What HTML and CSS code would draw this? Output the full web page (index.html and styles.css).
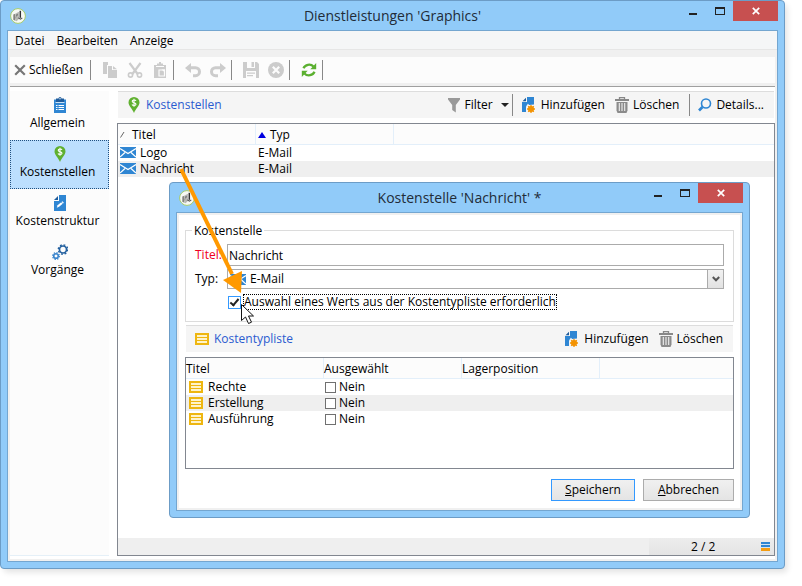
FILE: index.html
```
<!DOCTYPE html>
<html lang="de">
<head>
<meta charset="utf-8">
<title>Dienstleistungen 'Graphics'</title>
<link rel="stylesheet" href="styles.css">
</head>
<body>
<svg class="sprite" aria-hidden="true">
  <symbol id="app" viewBox="0 0 16 16"><circle cx="8" cy="8" r="7.400" fill="#f7f9f5" stroke="#a5cc6b" stroke-width="1"/><path d="M3.300 6.500l2-.8v7l-2-.9z" fill="#85857f"/><path d="M5.300 5.700l3-1.700v7.500l-1.600 1.700-1.400-.5z" fill="#b9bab4"/><path d="M6.300 6.800l1.300-.8v1.300l-1.300.7zM5.300 10.500l1.200-3" fill="#777" stroke="#777" stroke-width=".5"/><path d="M10.300 2.800v7" stroke="#333" stroke-width="1.500"/><path d="M8 9.800l2.500 1.400 1.800-1.300" fill="none" stroke="#555" stroke-width="1.100"/><path d="M8.600 4v5" stroke="#aaa" stroke-width=".8"/></symbol>
  <symbol id="close" viewBox="0 0 12 12"><path d="M1.200 1.200l9.600 9.600M10.800 1.200L1.200 10.800" stroke="#777" stroke-width="2.200"/></symbol>
  <symbol id="copy" viewBox="0 0 16 16"><path d="M1 0h5v3H5v9H1z"/><path d="M6 4h4v4h5v8H6z"/><path d="M11 4l4 3.200h-4z"/></symbol>
  <symbol id="cut" viewBox="0 0 16 16"><path d="M2.500 1L11 12.500M13.500 1L5 12.500" stroke="#ccc" stroke-width="2.200" fill="none"/><circle cx="3.500" cy="13" r="2.100" fill="none" stroke="#ccc" stroke-width="1.600"/><circle cx="12.500" cy="13" r="2.100" fill="none" stroke="#ccc" stroke-width="1.600"/></symbol>
  <symbol id="paste" viewBox="0 0 16 16"><path d="M2 3h3V1.500h2V0h2v1.500h2V3h3v13H2z"/><path d="M4 4.500h8M7 8h5.500v6H7z" stroke="#fcfcfc" stroke-width="1.200" fill="none"/><path d="M9.500 7.500h3.500v3z" fill="#fcfcfc"/></symbol>
  <symbol id="undo" viewBox="0 0 16 16"><path d="M0 6l6-5v3.200h4.500a5.500 5.500 0 0 1 0 11H8v-3h2.500a2.500 2.500 0 0 0 0-5H6V11z"/></symbol>
  <symbol id="redo" viewBox="0 0 16 16"><path d="M16 6l-6-5v3.200H5.500a5.500 5.500 0 0 0 0 11H8v-3H5.500a2.500 2.500 0 0 1 0-5H10V11z"/></symbol>
  <symbol id="save" viewBox="0 0 16 16"><path d="M0 0h14l2 2v14H0z"/><path d="M4 0h8v6H4zM3 9h10v7H3z" fill="#fcfcfc"/><path d="M8.500 0H11v5H8.500zM4 10.500h8v1.300H4zM4 13h6v1.300H4z"/></symbol>
  <symbol id="cancel" viewBox="0 0 16 16"><circle cx="8" cy="8" r="8"/><path d="M4.800 4.800l6.400 6.400M11.200 4.800l-6.400 6.400" stroke="#fcfcfc" stroke-width="2.200"/></symbol>
  <symbol id="refresh" viewBox="0 0 16 16"><path d="M2.500 6.200C4 2.500 9.500 1.300 12.500 4.500" fill="none" stroke="#5bb030" stroke-width="2.300"/><path d="M15.200 1v6.300H9.300z" fill="#5bb030"/><path d="M13.500 9.800c-1.500 3.700-7 4.900-10 1.700" fill="none" stroke="#5bb030" stroke-width="2.300"/><path d="M.8 15V8.700h5.900z" fill="#5bb030"/></symbol>
  <symbol id="clipboard" viewBox="0 0 16 16"><path d="M2 2.500h12V16H2z" fill="#2f86d3"/><path d="M4 1.500h2.500a1.500 1.500 0 0 1 3 0H12V5H4z" fill="#1f5c9c"/><path d="M7.300 1.300h1.400v1H7.300zM3.500 5h9v.8h-9z" fill="#fff"/><path d="M4 8.500h1.500M6.500 8.500H12M4 10.500h1.500M6.500 10.500H12M4 12.500h1.500M6.500 12.500H12" stroke="#fff"/></symbol>
  <symbol id="pin" viewBox="0 0 16 16"><path d="M8 0a5.500 5.500 0 0 1 5.500 5.500C13.500 9 9.500 12 8 16 6.500 12 2.500 9 2.500 5.500A5.500 5.500 0 0 1 8 0z" fill="#5fb02f"/><path d="M10 3.800C9.500 2.700 6.200 2.600 6.200 4.300c0 1.900 3.800 1 3.800 2.900 0 1.700-3.400 1.600-4 .3M8 1.800v8" fill="none" stroke="#fff" stroke-width="1.100"/></symbol>
  <symbol id="struct" viewBox="0 0 16 16"><path d="M7 0h7v16H2V6h5z" fill="#2f86d3"/><path d="M2 5l4-4v4z" fill="#1f5c9c"/><path d="M4.800 12.700l.8-2.400 4.800-4 1.500 1.500-4.800 4z" fill="#fff"/><path d="M9.200 7l1.600 1.700" stroke="#2f86d3" stroke-width=".7"/></symbol>
  <symbol id="gears" viewBox="0 0 16 16"><circle cx="11" cy="5.500" r="3.500" fill="none" stroke="#23609f" stroke-width="1.700"/><circle cx="11" cy="5.500" r="4.700" fill="none" stroke="#23609f" stroke-width="1.400" stroke-dasharray="1.850 1.840"/><circle cx="4" cy="12" r="2.300" fill="none" stroke="#3c86cd" stroke-width="1.600"/><circle cx="4" cy="12" r="3.400" fill="none" stroke="#3c86cd" stroke-width="1.200" stroke-dasharray="1.340 1.330"/></symbol>
  <symbol id="funnel" viewBox="0 0 14 16"><path d="M1 1h12v1.500L8.800 8v7.500L5.200 13V8L1 2.500z" fill="#999"/></symbol>
  <symbol id="add" viewBox="0 0 16 16"><path d="M6 0h7v15H1V5h5z" fill="#2f86d3"/><path d="M1.500 4.300L5 .8v3.500z" fill="#1f5c9c"/><path d="M7 6.500h7V16H5v-6.500z" fill="#f5f5f5"/><path d="M6 5h7v2.500L8 8z" fill="#2f86d3"/><circle cx="10" cy="12" r="3" fill="#f39200"/><path d="M10 8v8M6 12h8M7.200 9.200l5.600 5.600M12.800 9.200l-5.600 5.600" stroke="#f39200" stroke-width="1.300"/></symbol>
  <symbol id="trash" viewBox="0 0 14 16"><path d="M4.500 2V.7h5V2" fill="none" stroke="#888" stroke-width="1.300"/><path d="M0 2h14v2H0z" fill="#888"/><path d="M1.500 5h11v8.500L11.500 16h-9l-1-2.500z" fill="#8b8b8b"/><path d="M4.300 6v8M7 6v8M9.700 6v8" stroke="#f0f0f0" stroke-width="1.100"/></symbol>
  <symbol id="lens" viewBox="0 0 14 14"><circle cx="8" cy="5.500" r="4.500" fill="none" stroke="#2f86d3" stroke-width="1.600"/><path d="M4.500 9L1 12.500" stroke="#2f86d3" stroke-width="2.600"/></symbol>
  <symbol id="mail" viewBox="0 0 16 11"><path d="M0 0h16v11H0z" fill="#2f86d3"/><path d="M0 1.500l8 5 8-5M0 10l5-4.500M16 10l-5-4.500" fill="none" stroke="#fff" stroke-width="1.200"/></symbol>
  <symbol id="list" viewBox="0 0 14 12"><path d="M0 0h14v12H0z" fill="#eeb610"/><path d="M2 2h10v2H2zM2 5h10v2H2zM2 8h10v2H2z" fill="#fff3c8"/></symbol>
  <symbol id="min" viewBox="0 0 10 10"><path d="M1 7h8v2H1z" fill="#222"/></symbol>
  <symbol id="max" viewBox="0 0 10 8"><path d="M0 0h10v8H0zM1 2v5h8V2z" fill="#222" fill-rule="evenodd"/></symbol>
  <symbol id="x" viewBox="0 0 8 8"><path d="M.8.8l6.400 6.400M7.200.8L.8 7.200" stroke="#fff" stroke-width="1.700"/></symbol>
</svg>

<main class="window">
  <header class="titlebar">
    <svg class="app-icon"><use href="#app"/></svg>
    <h1>Dienstleistungen 'Graphics'</h1>
    <div class="controls">
      <button class="control" aria-label="Minimieren"><svg class="i10"><use href="#min"/></svg></button>
      <button class="control" aria-label="Maximieren"><svg class="imax"><use href="#max"/></svg></button>
      <button class="control quit" aria-label="Fenster schließen"><svg class="ix"><use href="#x"/></svg></button>
    </div>
  </header>

  <div class="client">
    <nav class="menu">
      <button>Datei</button>
      <button>Bearbeiten</button>
      <button>Anzeige</button>
    </nav>
    <div class="toolbar">
      <button class="tool"><svg class="i12"><use href="#close"/></svg>Schließen</button>
      <span class="sep"></span>
      <button class="icon-btn" aria-label="Kopieren"><svg class="i16"><use href="#copy"/></svg></button>
      <button class="icon-btn" aria-label="Ausschneiden"><svg class="i16"><use href="#cut"/></svg></button>
      <button class="icon-btn" aria-label="Einfügen"><svg class="i16"><use href="#paste"/></svg></button>
      <span class="sep"></span>
      <button class="icon-btn" aria-label="Rückgängig"><svg class="i16"><use href="#undo"/></svg></button>
      <button class="icon-btn" aria-label="Wiederholen"><svg class="i16"><use href="#redo"/></svg></button>
      <span class="sep"></span>
      <button class="icon-btn" aria-label="Sichern"><svg class="i16"><use href="#save"/></svg></button>
      <button class="icon-btn" aria-label="Verwerfen"><svg class="i16"><use href="#cancel"/></svg></button>
      <span class="sep"></span>
      <button class="icon-btn" aria-label="Aktualisieren"><svg class="i16"><use href="#refresh"/></svg></button>
      <span class="sep"></span>
    </div>

    <div class="workspace">
      <nav class="sidebar">
        <a class="side-item" href="#"><svg class="i16"><use href="#clipboard"/></svg><span>Allgemein</span></a>
        <a class="side-item current" href="#"><svg class="i16"><use href="#pin"/></svg><span>Kostenstellen</span></a>
        <a class="side-item" href="#"><svg class="i16"><use href="#struct"/></svg><span>Kostenstruktur</span></a>
        <a class="side-item" href="#"><svg class="i16"><use href="#gears"/></svg><span>Vorgänge</span></a>
      </nav>

      <section class="content">
        <div class="panel-bar">
          <svg class="i16"><use href="#pin"/></svg>
          <h2>Kostenstellen</h2>
          <div class="actions">
            <button class="action filter"><svg class="i14"><use href="#funnel"/></svg>Filter<span class="caret"></span></button>
            <button class="action divided"><svg class="i16"><use href="#add"/></svg>Hinzufügen</button>
            <button class="action"><svg class="i14"><use href="#trash"/></svg>Löschen</button>
            <button class="action divided"><svg class="i14"><use href="#lens"/></svg>Details...</button>
          </div>
        </div>
        <div class="list">
          <table class="grid main-grid">
            <colgroup><col class="c-type"><col class="c-type"><col></colgroup>
            <thead><tr><th><svg class="slash" viewBox="0 0 6 8"><path d="M.5 6.500L4 1" stroke="#666" fill="none"/></svg>Titel</th><th><span class="sort"></span>Typ</th><th></th></tr></thead>
            <tbody>
              <tr><td><svg class="imail"><use href="#mail"/></svg>Logo</td><td>E-Mail</td><td></td></tr>
              <tr><td><svg class="imail"><use href="#mail"/></svg>Nachricht</td><td>E-Mail</td><td></td></tr>
            </tbody>
          </table>
          <footer class="status"><div class="count"><span>2 / 2</span><i class="bars"></i></div></footer>
        </div>
      </section>
    </div>
  </div>

  <section class="window dialog" role="dialog" aria-labelledby="dialog-title">
    <header class="titlebar">
      <svg class="app-icon"><use href="#app"/></svg>
      <h1 id="dialog-title">Kostenstelle 'Nachricht' *</h1>
      <div class="controls">
        <button class="control" aria-label="Minimieren"><svg class="i10"><use href="#min"/></svg></button>
        <button class="control" aria-label="Maximieren"><svg class="imax"><use href="#max"/></svg></button>
        <button class="control quit" aria-label="Dialog schließen"><svg class="ix"><use href="#x"/></svg></button>
      </div>
    </header>
    <form class="client form">
      <fieldset>
        <legend>Kostenstelle</legend>
        <label class="required" for="title">Titel:</label>
        <input class="text" id="title" type="text" value="Nachricht">
        <label for="type">Typ:</label>
        <div class="combo">
          <select id="type"><option>E-Mail</option></select>
          <svg class="imail"><use href="#mail"/></svg>
          <span class="drop"><svg viewBox="0 0 8 6"><path d="M.8 1L4 4.300 7.200 1" fill="none" stroke="#555" stroke-width="2"/></svg></span>
        </div>
        <div class="check">
          <input id="must" type="checkbox" checked>
          <label for="must">Auswahl eines Werts aus der Kostentypliste erforderlich</label>
        </div>
      </fieldset>
      <div class="panel-bar">
        <svg class="ilist"><use href="#list"/></svg>
        <h2>Kostentypliste</h2>
        <div class="actions">
          <button type="button" class="action"><svg class="i16"><use href="#add"/></svg>Hinzufügen</button>
          <button type="button" class="action"><svg class="i14"><use href="#trash"/></svg>Löschen</button>
        </div>
      </div>
      <div class="list types">
        <table class="grid type-grid">
          <colgroup><col class="c-type"><col class="c-type"><col class="c-type"><col></colgroup>
          <thead><tr><th>Titel</th><th>Ausgewählt</th><th>Lagerposition</th><th></th></tr></thead>
          <tbody>
            <tr><td><svg class="ilist"><use href="#list"/></svg>Rechte</td><td><label><input type="checkbox">Nein</label></td><td></td><td></td></tr>
            <tr><td><svg class="ilist"><use href="#list"/></svg>Erstellung</td><td><label><input type="checkbox">Nein</label></td><td></td><td></td></tr>
            <tr><td><svg class="ilist"><use href="#list"/></svg>Ausführung</td><td><label><input type="checkbox">Nein</label></td><td></td><td></td></tr>
          </tbody>
        </table>
      </div>
      <div class="buttons">
        <button type="button" class="push primary"><span><u>S</u>peichern</span></button>
        <button type="button" class="push"><span><u>A</u>bbrechen</span></button>
      </div>
    </form>
  </section>

  <svg class="pointer-arrow" viewBox="0 0 80 160" aria-hidden="true">
    <path d="M6 4L57 109" stroke="#ff9900" stroke-width="4"/>
    <path d="M48 115L67 106 66 128z" fill="#ff9900"/>
    <path d="M66.500 139.500v16l4-3.500 3 6.500 3-1.300-3-6.200h5z" fill="#fff" stroke="#111"/>
  </svg>
</main>
</body>
</html>
```
FILE: styles.css
```
*, *::before, *::after { box-sizing: border-box; }

body {
  margin: 0;
  padding: 0 17px 17px 0;
  min-height: 100vh;
  display: flex;
  background: #fff;
  color: #000;
  font: 12px/16px "Open Sans", "Noto Sans", sans-serif;
}

button, input, select { font: inherit; color: inherit; margin: 0; }
button { background: none; border: 0; padding: 0; white-space: nowrap; }
h1, h2 { margin: 0; font-weight: 400; }
svg { display: block; flex: none; }

.sprite { position: absolute; width: 0; height: 0; }
.i16 { width: 16px; height: 16px; }
.i14 { width: 14px; height: 16px; }
.i12 { width: 12px; height: 12px; }
.i10 { width: 10px; height: 10px; }
.imax { width: 10px; height: 8px; }
.ix { width: 8px; height: 8px; }
.imail { width: 16px; height: 11px; }
.ilist { width: 14px; height: 12px; }

/* Window frame */
.window {
  position: relative;
  flex: 1;
  display: flex;
  flex-direction: column;
  padding: 0 6px 6px;
  border: 1px solid #6c9cc6;
  border-radius: 4px;
  background: #91cbf9;
  box-shadow: 3px 4px 6px -1px rgba(0, 0, 0, 0.12);
}

.titlebar {
  display: grid;
  grid-template-columns: 1fr auto 1fr;
  align-items: center;
  height: 29px;
}
.titlebar h1 { font-size: 14px; line-height: 20px; color: #222c38; }
.app-icon { width: 16px; height: 16px; margin-left: 3px; }
.controls { display: flex; align-self: start; justify-content: flex-end; }
.control {
  display: grid;
  place-items: center;
  width: 27px;
  height: 20px;
}
.quit { width: 45px; background: #c75050; }

.client {
  flex: 1;
  display: flex;
  flex-direction: column;
  border: 1px solid #74a6d0;
  background: #f0f0f0;
}

/* Menu and toolbar */
.menu {
  display: flex;
  gap: 12px;
  height: 19px;
  padding: 2px 7px 0;
  background: #f5f6f7;
  border-bottom: 1px solid #e6e6e6;
}
.toolbar {
  display: flex;
  align-items: center;
  height: 26px;
  margin: 7px 2px 3px;
  padding-left: 4px;
  background: #fcfcfc;
  fill: #ccc;
}
.tool { display: flex; align-items: center; gap: 3px; padding-right: 6px; }
.sep { width: 1px; height: 20px; margin: 0 6px 0 1px; background: #888; }
.icon-btn { display: grid; place-items: center; width: 25px; height: 20px; }

/* Workspace */
.workspace {
  flex: 1;
  display: flex;
  gap: 8px;
  margin: 0 2px 2px;
  padding: 4px 0 3px;
  border-top: 1px solid #a0a0a0;
  background: #fff;
}
.sidebar {
  width: 99px;
  background: #fcfcfc;
  border-bottom: 1px solid #e5f0f8;
}
.side-item {
  display: flex;
  flex-direction: column;
  align-items: center;
  gap: 2px;
  height: 49px;
  padding-top: 5px;
  border: 1px solid transparent;
  color: inherit;
  text-decoration: none;
}
.side-item span { padding-right: 4px; }
.current { background: #bcdffe; border: 1px dotted #205080; }

.content { flex: 1; display: flex; flex-direction: column; }
.panel-bar {
  display: flex;
  align-items: center;
  height: 27px;
  margin: 0 1px 5px;
  padding: 0 10px 0 8px;
  border-top: 1px solid #ddd;
  background: #f5f5f5;
}
.panel-bar h2 { margin-left: 4px; font-size: 12px; color: #2a5bd0; }
.panel-bar .ilist { margin: 0 1px; }
.actions { display: flex; align-items: center; gap: 10px; margin-left: auto; }
.action { display: flex; align-items: center; gap: 4px; height: 22px; }
.divided { padding-left: 8px; border-left: 1px solid #888; }
.filter { margin-right: -7px; }
.caret {
  margin-left: 4px;
  border: 4px solid transparent;
  border-top-color: #222;
  border-bottom: 0;
}

/* Lists */
.list {
  flex: 1;
  display: flex;
  flex-direction: column;
  border: 1px solid #828790;
  background: #fff;
}
.grid { width: 100%; table-layout: fixed; border-spacing: 0; }
.c-type { width: 138px; }
.grid th, .grid td { padding: 0; font-weight: 400; text-align: left; white-space: nowrap; }
.grid th {
  height: 21px;
  padding-top: 2px;
  background: #fcfcfc;
  border-right: 1px solid #e3effa;
  border-bottom: 1px solid #e3effa;
}
.grid th:last-child { border-right: 0; }
.grid td { height: 16px; line-height: 16px; }
.grid td svg { display: inline-block; vertical-align: middle; margin: 0 4px 2px 2px; }
.grid tbody tr:nth-child(even) { background: #efefef; }
.main-grid td:nth-child(2) { padding-left: 2px; }
.slash { display: inline-block; width: 6px; height: 8px; margin: 0 6px 0 2px; }
.sort {
  display: inline-block;
  margin: 0 4px 1px 2px;
  border: 4px solid transparent;
  border-top: 0;
  border-bottom: 6px solid #0000e0;
}
.status { display: flex; justify-content: flex-end; margin-top: auto; background: #efefef; }
.count {
  display: flex;
  align-items: center;
  justify-content: space-between;
  width: 125px;
  height: 17px;
  padding: 0 4px 0 42px;
  background: linear-gradient(#ededed, #e4e4e4);
}
.bars {
  width: 9px;
  height: 9px;
  background: linear-gradient(#2f86d3 2px, #cfe2f3 2px 3px, #2f86d3 3px 5px, #cfe2f3 5px 6px, #f39c12 6px);
}

/* Dialog */
.dialog { position: absolute; top: 181px; left: 168px; right: 34px; box-shadow: none; }
.form { padding: 17px 8px 9px; box-shadow: inset 0 0 0 2px #f0f0f0; background: #fff; }
fieldset {
  position: relative;
  display: grid;
  grid-template-columns: 32px 1fr;
  align-items: center;
  gap: 3px 0;
  margin: 0 0 3px;
  padding: 13px 9px 11px;
  border: 1px solid #dcdcdc;
}
legend {
  position: absolute;
  top: -8px;
  left: 6px;
  padding: 0 2px;
  background: #fff;
}
.required { color: #f00020; }
.text, .combo select {
  width: 100%;
  height: 22px;
  padding: 0 1px;
  border: 1px solid #ababab;
  border-radius: 0;
  background: #fff;
}
.combo { position: relative; }
.combo select { display: block; appearance: none; height: 20px; padding-left: 22px; }
.combo .imail { position: absolute; left: 3px; top: 5px; }
.drop {
  position: absolute;
  inset: 0 0 0 auto;
  display: grid;
  place-items: center;
  width: 17px;
  border: 1px solid #ababab;
  background: linear-gradient(#f2f2f2, #e2e2e2);
  pointer-events: none;
}
.drop svg { width: 8px; height: 6px; }
.check {
  grid-column: 2;
  display: flex;
  align-items: center;
  gap: 2px;
  margin-top: 2px;
  padding-left: 1px;
}
.check label { outline: 1px dotted #000; outline-offset: -1px; line-height: 16px; padding: 0 1px; }

input[type="checkbox"] {
  appearance: none;
  width: 11px;
  height: 11px;
  border: 1px solid #707070;
  background: #fff;
}
.check input[type="checkbox"] { width: 13px; height: 13px; border-color: #3399ff; position: relative; }
.check input::after {
  content: "";
  position: absolute;
  left: 3px;
  top: 0;
  width: 5px;
  height: 9px;
  border: solid #222;
  border-width: 0 2px 2px 0;
  transform: rotate(40deg);
}
.types { flex: none; height: 112px; }
.type-grid label { display: flex; align-items: center; gap: 3px; padding-left: 1px; }
.grid .ilist { margin: 0 5px 2px 3px; }
.buttons { display: flex; justify-content: flex-end; gap: 8px; margin-top: 10px; }
.push {
  min-width: 91px;
  height: 22px;
  border: 1px solid #acacac;
  background: linear-gradient(#f0f0f0, #e4e4e4);
}
.primary { min-width: 84px; border-color: #3399ff; }

/* Annotation above both windows */
.pointer-arrow { position: absolute; left: 174px; top: 164px; width: 80px; height: 160px; pointer-events: none; }
```
